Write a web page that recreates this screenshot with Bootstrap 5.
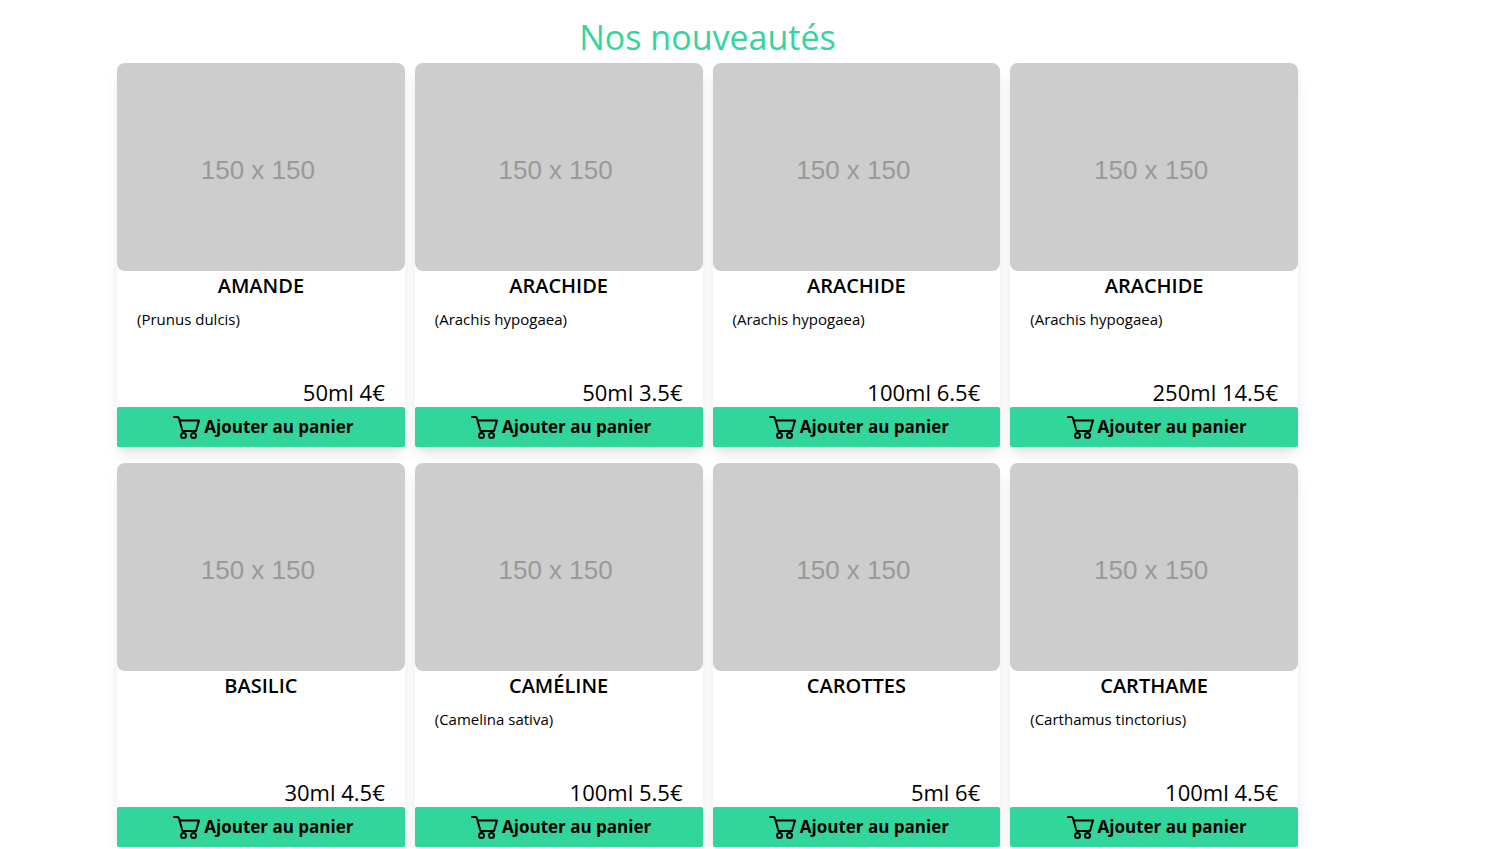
<!DOCTYPE html>
<html lang="fr">
<head>
<meta charset="utf-8">
<meta name="viewport" content="width=device-width, initial-scale=1">
<title>Nos nouveautés</title>
<link href="https://cdn.jsdelivr.net/npm/bootstrap@5.3.0/dist/css/bootstrap.min.css" rel="stylesheet">
<style>
  body { font-family: "Open Sans", "Noto Sans", sans-serif; color: #000; background: #fff; }
  .shop { padding: 12px 193px 0 117px; }
  .shop-title { color: #32d69c; font-size: 34px; line-height: 51px; font-weight: 400; }
  .product-grid { display: grid; grid-template-columns: repeat(4, minmax(0, 1fr)); gap: 16px 10px; }
  .product { border-radius: 8px 8px 2px 2px; background: #fff; box-shadow: 0 10px 15px -3px rgba(0,0,0,.1), 0 4px 6px -2px rgba(0,0,0,.05); }
  .thumb { height: 208px; border-radius: 8px; background: #cdcdcd; color: #999; font: 400 26px/1 "Liberation Sans", sans-serif; padding: 6px 6px 0 0; }
  .product-name { font-size: 20px; line-height: 30px; font-weight: 600; }
  .latin { font-size: 15px; line-height: 24px; min-height: 24px; margin-top: 6px; }
  .price { font-size: 22px; line-height: 30px; margin-top: 46px; }
  .add { height: 40px; border: 0; border-radius: 2px; background: #32d69c; color: #000; font-size: 17px; line-height: 24px; font-weight: 700; gap: 4px; }
</style>
</head>
<body>
<svg class="d-none" aria-hidden="true">
  <symbol id="cart" viewBox="0 0 28 24">
    <g fill="none" stroke="#000" stroke-width="2" stroke-linecap="round" stroke-linejoin="round">
      <path d="M2 2h3.500q1 0 1.400 1.200L10.500 16H23.500M8.500 5.500H27L24 16"/>
      <circle cx="11.500" cy="20.500" r="2.500"/><circle cx="21.500" cy="20.500" r="2.500"/>
    </g>
  </symbol>
</svg>
<main class="shop">
  <h1 class="shop-title text-center m-0">Nos nouveautés</h1>
  <div class="product-grid" id="products"></div>
</main>
<script>
  const products = [
    ["AMANDE", "(Prunus dulcis)", "50ml 4€"],
    ["ARACHIDE", "(Arachis hypogaea)", "50ml 3.5€"],
    ["ARACHIDE", "(Arachis hypogaea)", "100ml 6.5€"],
    ["ARACHIDE", "(Arachis hypogaea)", "250ml 14.5€"],
    ["BASILIC", "", "30ml 4.5€"],
    ["CAMÉLINE", "(Camelina sativa)", "100ml 5.5€"],
    ["CAROTTES", "", "5ml 6€"],
    ["CARTHAME", "(Carthamus tinctorius)", "100ml 4.5€"]
  ];
  document.getElementById("products").innerHTML = products.map(([name, latin, price]) => `
    <article class="product d-flex flex-column">
      <div class="thumb d-flex align-items-center justify-content-center">150 x 150</div>
      <h2 class="product-name text-center m-0">${name}</h2>
      <div class="latin px-3 mx-1">${latin}</div>
      <div class="price text-end px-3 mx-1">${price}</div>
      <button type="button" class="add w-100 d-flex align-items-center justify-content-center p-0 ps-1">
        <svg width="28" height="24" aria-hidden="true"><use href="#cart"/></svg><span>Ajouter au panier</span>
      </button>
    </article>`).join("");
</script>
<script src="https://cdn.jsdelivr.net/npm/bootstrap@5.3.0/dist/js/bootstrap.bundle.min.js"></script>
</body>
</html>
